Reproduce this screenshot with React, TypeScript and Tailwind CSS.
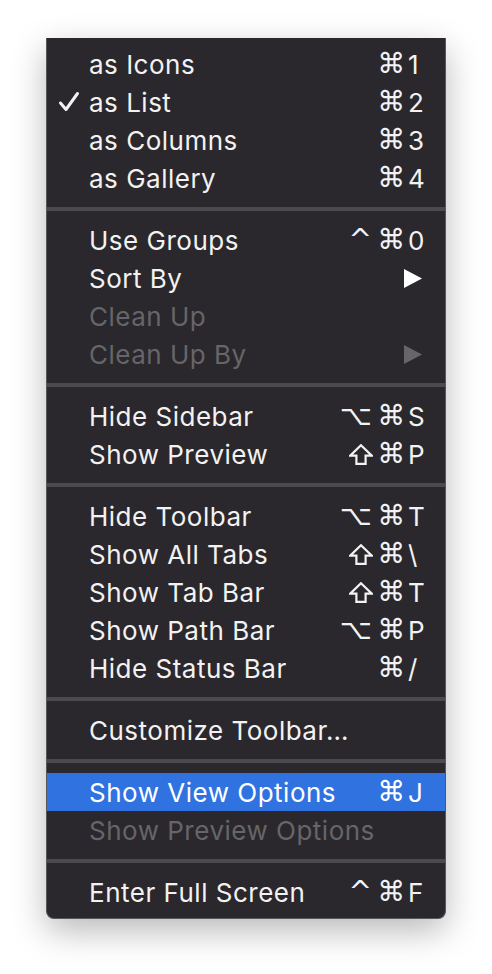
import React from 'react';

type Item =
  | { type: 'sep' }
  | {
      type: 'item';
      label: string;
      mods?: string[];
      keyChar?: string;
      checked?: boolean;
      disabled?: boolean;
      submenu?: boolean;
      active?: boolean;
    };

const items: Item[] = [
  { type: 'item', label: 'as Icons', mods: ['⌘'], keyChar: '1' },
  { type: 'item', label: 'as List', mods: ['⌘'], keyChar: '2', checked: true },
  { type: 'item', label: 'as Columns', mods: ['⌘'], keyChar: '3' },
  { type: 'item', label: 'as Gallery', mods: ['⌘'], keyChar: '4' },
  { type: 'sep' },
  { type: 'item', label: 'Use Groups', mods: ['^', '⌘'], keyChar: '0' },
  { type: 'item', label: 'Sort By', submenu: true },
  { type: 'item', label: 'Clean Up', disabled: true },
  { type: 'item', label: 'Clean Up By', disabled: true, submenu: true },
  { type: 'sep' },
  { type: 'item', label: 'Hide Sidebar', mods: ['⌥', '⌘'], keyChar: 'S' },
  { type: 'item', label: 'Show Preview', mods: ['shift', '⌘'], keyChar: 'P' },
  { type: 'sep' },
  { type: 'item', label: 'Hide Toolbar', mods: ['⌥', '⌘'], keyChar: 'T' },
  { type: 'item', label: 'Show All Tabs', mods: ['shift', '⌘'], keyChar: '\\' },
  { type: 'item', label: 'Show Tab Bar', mods: ['shift', '⌘'], keyChar: 'T' },
  { type: 'item', label: 'Show Path Bar', mods: ['⌥', '⌘'], keyChar: 'P' },
  { type: 'item', label: 'Hide Status Bar', mods: ['⌘'], keyChar: '/' },
  { type: 'sep' },
  { type: 'item', label: 'Customize Toolbar…' },
  { type: 'sep' },
  { type: 'item', label: 'Show View Options', mods: ['⌘'], keyChar: 'J', active: true },
  { type: 'item', label: 'Show Preview Options', disabled: true },
  { type: 'sep' },
  { type: 'item', label: 'Enter Full Screen', mods: ['^', '⌘'], keyChar: 'F' },
];

const Check = () => (
  <svg width="22" height="22" viewBox="0 0 22 22" className="absolute left-[11px] top-[8px]">
    <polyline
      points="2.5,12 8,18.5 19.5,2.5"
      fill="none"
      stroke="currentColor"
      strokeWidth="3"
      strokeLinecap="round"
      strokeLinejoin="round"
    />
  </svg>
);

const Arrow = ({ dim }: { dim?: boolean }) => (
  <svg width="18" height="19" viewBox="0 0 18 19" className={dim ? 'text-[#666568]' : 'text-white'}>
    <polygon points="0,0 18,9.5 0,19" fill="currentColor" />
  </svg>
);

const Shift = () => (
  <svg width="24" height="21" viewBox="0 0 24 21" className="shrink-0">
    <path d="M12 1.2 L22.8 11.6 H16.6 V19.8 H7.4 V11.6 H1.2 Z" fill="none" stroke="currentColor" strokeWidth="2.2" strokeLinejoin="miter" />
  </svg>
);

const Mod = ({ m }: { m: string }) =>
  m === 'shift' ? (
    <Shift />
  ) : (
    <span className="text-[28px] leading-none" style={{ fontFamily: '"DejaVu Sans", sans-serif' }}>
      {m}
    </span>
  );

const App = () => {
  return (
    <div className="min-h-screen bg-white pt-[38px]" style={{ fontFamily: 'Inter, "DejaVu Sans", sans-serif' }}>
      <div className="ml-[46px] w-[400px] rounded-b-[8px] border-x border-b border-[#58575b] bg-[#2a282c] py-[7px] shadow-[0_12px_34px_rgba(0,0,0,0.28)]">
        {items.map((it, i) =>
          it.type === 'sep' ? (
            <div key={i} className="flex h-[24px] items-center">
              <div className="h-[4px] w-full bg-[#4b4a4e]" />
            </div>
          ) : (
            <div
              key={i}
              className={`relative flex h-[38px] items-center pl-[42px] pr-[17px] text-[26px] tracking-[0.5px] ${
                it.active ? 'bg-[#2f72e0] text-white' : it.disabled ? 'text-[#666568]' : 'text-[#f2f2f2]'
              }`}
            >
              {it.checked && <Check />}
              <span className="flex-1 whitespace-nowrap">{it.label}</span>
              {it.submenu && (
                <span className="mr-[6px] flex items-center">
                  <Arrow dim={it.disabled} />
                </span>
              )}
              {it.keyChar && (
                <span className="flex items-center">
                  <span className="flex items-center gap-[5px]">
                    {it.mods?.map((m, j) => (
                      <Mod key={j} m={m} />
                    ))}
                  </span>
                  <span className="w-[22px] pl-[2px] text-[26px] tracking-normal">{it.keyChar}</span>
                </span>
              )}
            </div>
          )
        )}
      </div>
    </div>
  );
};

export default App;
